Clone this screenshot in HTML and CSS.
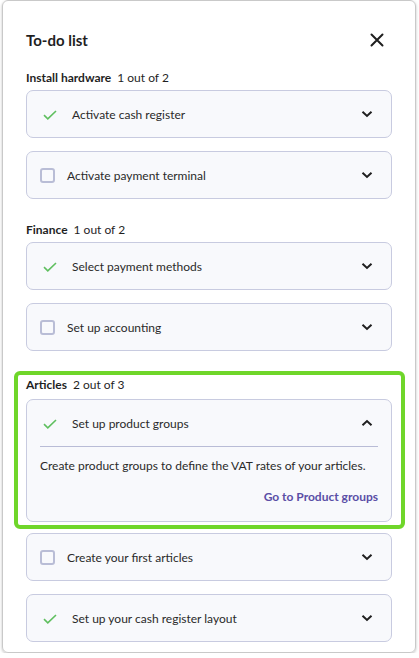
FILE: index.html
```html
<!DOCTYPE html>
<html lang="en">
<head>
<meta charset="utf-8">
<title>To-do list</title>
<link rel="stylesheet" href="styles.css">
</head>
<body>
<div class="panel">
  <div class="head">
    <h1 class="title">To-do list</h1>
    <svg class="close" width="14" height="14" viewBox="0 0 14 14"><path d="M1.5 1.5 L12.5 12.5 M12.5 1.5 L1.5 12.5" stroke="#1f1f1f" stroke-width="2" stroke-linecap="round" fill="none"/></svg>
  </div>

  <div class="section">
    <div class="label"><b>Install hardware</b><span>1 out of 2</span></div>
    <div class="card done">
      <div class="row">
        <svg class="check" width="14" height="10" viewBox="0 0 14 10"><path d="M1 5.2 L4.8 8.8 L13 1" stroke="#5fbf5f" stroke-width="1.6" fill="none"/></svg>
        <span class="txt">Activate cash register</span>
        <svg class="chev" width="12" height="8" viewBox="0 0 12 8"><path d="M1.5 1.8 L6 6 L10.5 1.8" stroke="#1f1f1f" stroke-width="2" fill="none"/></svg>
      </div>
    </div>
    <div class="card todo">
      <div class="row">
        <span class="box"></span>
        <span class="txt">Activate payment terminal</span>
        <svg class="chev" width="12" height="8" viewBox="0 0 12 8"><path d="M1.5 1.8 L6 6 L10.5 1.8" stroke="#1f1f1f" stroke-width="2" fill="none"/></svg>
      </div>
    </div>
  </div>

  <div class="section">
    <div class="label"><b>Finance</b><span>1 out of 2</span></div>
    <div class="card done">
      <div class="row">
        <svg class="check" width="14" height="10" viewBox="0 0 14 10"><path d="M1 5.2 L4.8 8.8 L13 1" stroke="#5fbf5f" stroke-width="1.6" fill="none"/></svg>
        <span class="txt">Select payment methods</span>
        <svg class="chev" width="12" height="8" viewBox="0 0 12 8"><path d="M1.5 1.8 L6 6 L10.5 1.8" stroke="#1f1f1f" stroke-width="2" fill="none"/></svg>
      </div>
    </div>
    <div class="card todo">
      <div class="row">
        <span class="box"></span>
        <span class="txt">Set up accounting</span>
        <svg class="chev" width="12" height="8" viewBox="0 0 12 8"><path d="M1.5 1.8 L6 6 L10.5 1.8" stroke="#1f1f1f" stroke-width="2" fill="none"/></svg>
      </div>
    </div>
  </div>

  <div class="section">
    <div class="highlight">
      <div class="label"><b>Articles</b><span>2 out of 3</span></div>
      <div class="card done open">
        <div class="row">
          <svg class="check" width="14" height="10" viewBox="0 0 14 10"><path d="M1 5.2 L4.8 8.8 L13 1" stroke="#5fbf5f" stroke-width="1.6" fill="none"/></svg>
          <span class="txt">Set up product groups</span>
          <svg class="chev" width="12" height="8" viewBox="0 0 12 8"><path d="M1.5 6.2 L6 2 L10.5 6.2" stroke="#1f1f1f" stroke-width="2" fill="none"/></svg>
        </div>
        <div class="body">
          <p class="desc">Create product groups to define the VAT rates of your articles.</p>
          <div class="actions"><a class="link" href="#">Go to Product groups</a></div>
        </div>
      </div>
    </div>
    <div class="card todo">
      <div class="row">
        <span class="box"></span>
        <span class="txt">Create your first articles</span>
        <svg class="chev" width="12" height="8" viewBox="0 0 12 8"><path d="M1.5 1.8 L6 6 L10.5 1.8" stroke="#1f1f1f" stroke-width="2" fill="none"/></svg>
      </div>
    </div>
    <div class="card done">
      <div class="row">
        <svg class="check" width="14" height="10" viewBox="0 0 14 10"><path d="M1 5.2 L4.8 8.8 L13 1" stroke="#5fbf5f" stroke-width="1.6" fill="none"/></svg>
        <span class="txt">Set up your cash register layout</span>
        <svg class="chev" width="12" height="8" viewBox="0 0 12 8"><path d="M1.5 1.8 L6 6 L10.5 1.8" stroke="#1f1f1f" stroke-width="2" fill="none"/></svg>
      </div>
    </div>
  </div>
</div>
</body>
</html>
```

FILE: styles.css
```css
* { box-sizing: border-box; }
html, body { margin: 0; padding: 0; background: #ffffff; }
body {
  font-family: Lato, "Open Sans", "Liberation Sans", sans-serif;
  color: #2a2a2a;
  font-size: 12px;
}
.panel {
  margin: 0 3px 0 2px;
  height: 653px;
  border: 1px solid #c9c9c9;
  border-radius: 6px;
  box-shadow: 0 1px 3px rgba(0,0,0,0.25);
  padding: 30px 23px 0 23px;
  display: flex;
  flex-direction: column;
}
.head {
  display: flex;
  align-items: center;
  justify-content: space-between;
  height: 22px;
  margin-bottom: 22px;
}
.title {
  margin: 0;
  font-size: 15px;
  font-weight: 700;
  color: #1f1f1f;
}
.close { margin-right: 8px; }
.section {
  display: flex;
  flex-direction: column;
  gap: 13px;
  margin-bottom: 24px;
}
.section > .label { margin-bottom: -8px; }
.label {
  height: 14px;
  line-height: 14px;
  font-size: 12px;
  color: #1f1f1f;
}
.label b { font-weight: 700; margin-right: 6px; }
.highlight {
  position: relative;
  display: flex;
  flex-direction: column;
  gap: 7px;
  margin-top: 3px;
  margin-bottom: -2px;
}
.highlight::after {
  content: "";
  position: absolute;
  top: -7px; left: -12px; right: -13px; bottom: -7px;
  border: 4px solid #6fd62a;
  border-radius: 6px;
  pointer-events: none;
}
.card {
  background: #f8f9fc;
  border: 1px solid #c8cbe0;
  border-radius: 7px;
}
.row {
  height: 46px;
  display: flex;
  align-items: center;
  padding: 0 18px 0 16px;
}
.card.todo .row { padding-left: 13px; }
.check { flex: none; margin-right: 15px; margin-top: 1px; }
.box {
  flex: none;
  width: 15px;
  height: 15px;
  border: 2px solid #b9bdd6;
  border-radius: 3px;
  background: #f8f9fc;
  margin-right: 12px;
}
.txt { flex: 1; font-size: 12px; color: #2a2a2a; }
.chev { flex: none; }
.body {
  margin: 0 13px;
  border-top: 1px solid #b9bcd6;
  padding: 11px 0 16px;
}
.desc { margin: 0; line-height: 16px; font-size: 12px; color: #2a2a2a; }
.actions { display: flex; justify-content: flex-end; margin-top: 15px; }
.link {
  color: #5a4ea6;
  font-weight: 700;
  text-decoration: none;
  font-size: 12px;
  line-height: 16px;
}
```
